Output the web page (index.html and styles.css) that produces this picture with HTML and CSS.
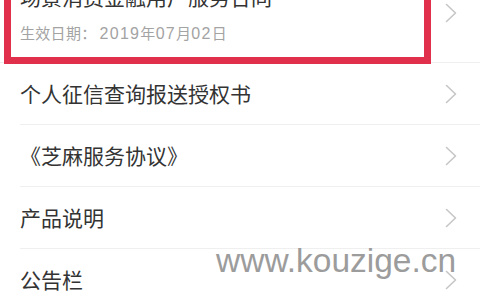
FILE: index.html
```html
<!DOCTYPE html>
<html lang="zh-CN">
<head>
<meta charset="utf-8">
<link rel="stylesheet" href="styles.css">
</head>
<body>
<div class="page">
  <div class="list">
    <div class="row first">
      <div class="texts">
        <div class="title">场景消费金融用户服务合同</div>
        <div class="date">生效日期<span class="colon">：</span><span class="num">2019</span>年<span class="num">07</span>月<span class="num">02</span>日</div>
      </div>
      <svg class="chev chev-top" viewBox="0 0 12 20"><path d="M1.5 1.5 L10.5 10 L1.5 18.5"/></svg>
      <div class="mark"></div>
    </div>
    <div class="row"><span class="label">个人征信查询报送授权书</span><svg class="chev" viewBox="0 0 12 20"><path d="M1.5 1.5 L10.5 10 L1.5 18.5"/></svg></div>
    <div class="row"><span class="label">《芝麻服务协议》</span><svg class="chev" viewBox="0 0 12 20"><path d="M1.5 1.5 L10.5 10 L1.5 18.5"/></svg></div>
    <div class="row"><span class="label">产品说明</span><svg class="chev" viewBox="0 0 12 20"><path d="M1.5 1.5 L10.5 10 L1.5 18.5"/></svg></div>
    <div class="row"><span class="label">公告栏</span><svg class="chev" viewBox="0 0 12 20"><path d="M1.5 1.5 L10.5 10 L1.5 18.5"/></svg></div>
  </div>
  <div class="watermark">www.kouzige.cn</div>
</div>
</body>
</html>
```
FILE: styles.css
```css
html, body {
  margin: 0;
  padding: 0;
  background: #ffffff;
  overflow: hidden;
}
.page {
  position: relative;
  width: 480px;
  height: 300px;
  overflow: hidden;
  font-family: "Noto Sans CJK SC", "Noto Sans", sans-serif;
  color: #333333;
}
.list {
  display: flex;
  flex-direction: column;
}
.row {
  position: relative;
  display: flex;
  align-items: center;
  justify-content: space-between;
  box-sizing: border-box;
  height: 62px;
  margin-left: 20px;
  padding-right: 23px;
  border-bottom: 1px solid #efefef;
}
.row.first {
  height: 81px;
  margin-top: -18px;
  margin-left: 0;
  padding-left: 20px;
  align-items: flex-start;
}
.texts {
  display: flex;
  flex-direction: column;
}
.title {
  font-size: 21px;
  line-height: 28px;
  color: #333333;
  white-space: nowrap;
}
.date {
  margin-top: 13px;
  font-size: 15px;
  line-height: 20px;
  letter-spacing: 0.3px;
  color: #a3a3a3;
  white-space: nowrap;
}
.date .colon {
  margin-right: 3px;
}
.date .num {
  font-family: "Liberation Sans", Arial, sans-serif;
  font-size: 16px;
  letter-spacing: 1.3px;
}
.label {
  font-size: 21px;
  line-height: 28px;
  padding-bottom: 2px;
  color: #333333;
  white-space: nowrap;
}
.chev {
  width: 12px;
  height: 20px;
  flex: none;
}
.chev path {
  fill: none;
  stroke: #c6c6c6;
  stroke-width: 1.6;
  stroke-linecap: round;
  stroke-linejoin: round;
}
.chev-top {
  margin-top: 21px;
}
.mark {
  position: absolute;
  left: 4px;
  right: 49px;
  top: -20px;
  bottom: -2px;
  border: 7px solid #e0304c;
}
.watermark {
  position: absolute;
  left: 216px;
  top: 244px;
  font-family: "Liberation Sans", Arial, sans-serif;
  font-size: 33.5px;
  line-height: 33.5px;
  color: #9c9c9c;
  white-space: nowrap;
}
```
